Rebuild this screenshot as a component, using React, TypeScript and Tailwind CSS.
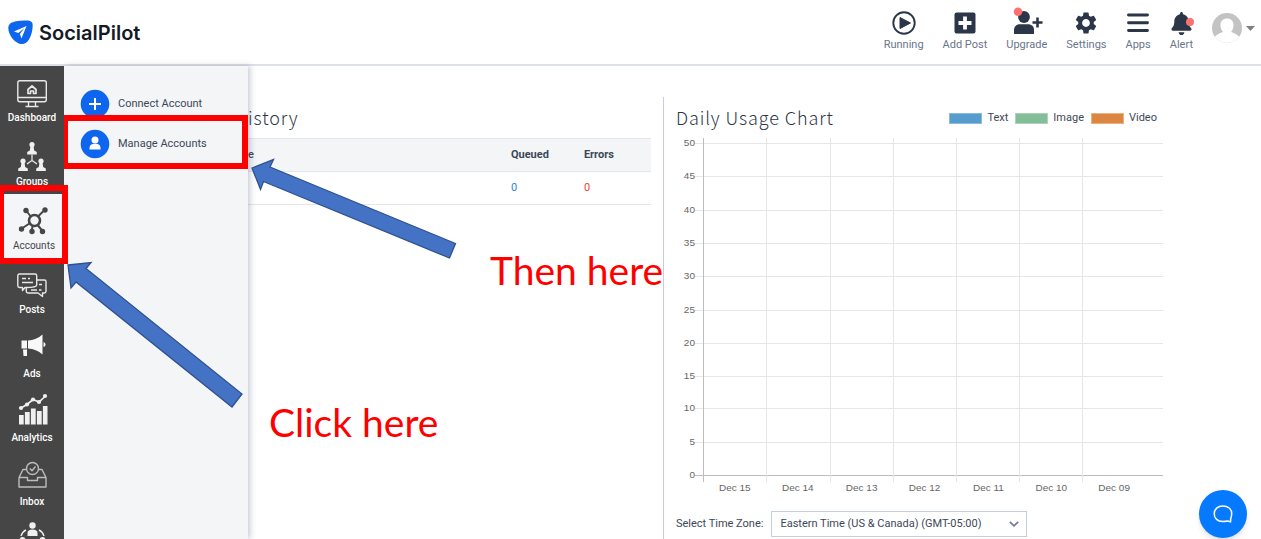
import type { ReactNode } from "react";
import { FaBell } from "react-icons/fa";
import { MdSettings } from "react-icons/md";

const TIME_ZONE = "Eastern Time (US & Canada) (GMT-05:00)";

const CHART_DAYS = ["Dec 15", "Dec 14", "Dec 13", "Dec 12", "Dec 11", "Dec 10", "Dec 09"];
const CHART_TICKS = [50, 45, 40, 35, 30, 25, 20, 15, 10, 5, 0];

type NavItem = {
  label: string;
  icon: ReactNode;
  active?: boolean;
};

const SIDE_ITEMS: NavItem[] = [
  { label: "Dashboard", icon: <DashboardIcon /> },
  { label: "Groups", icon: <GroupsIcon /> },
  { label: "Accounts", icon: <AccountsIcon />, active: true },
  { label: "Posts", icon: <PostsIcon /> },
  { label: "Ads", icon: <AdsIcon /> },
  { label: "Analytics", icon: <AnalyticsIcon /> },
  { label: "Inbox", icon: <InboxIcon /> },
  { label: "", icon: <TeamIcon /> },
];

const TOP_ITEMS: NavItem[] = [
  { label: "Running", icon: <RunningIcon /> },
  { label: "Add Post", icon: <AddPostIcon /> },
  { label: "Upgrade", icon: <UpgradeIcon /> },
  { label: "Settings", icon: <MdSettings className="size-[26px]" /> },
  { label: "Apps", icon: <AppsIcon /> },
  { label: "Alert", icon: <AlertIcon /> },
];

export default function App() {
  return (
    <div className="relative flex h-screen flex-col overflow-hidden bg-white font-['Roboto',sans-serif] text-[#3c4858]">
      <Header />
      <div className="flex min-h-0 flex-1">
        <Sidebar />
        <AccountsMenu />
        <main className="grid min-w-0 flex-1 grid-cols-[5fr_6fr] pr-[98px] pt-[31px]">
          <HistoryPanel />
          <UsagePanel />
        </main>
      </div>
      <Annotations />
      <button
        type="button"
        aria-label="Open chat"
        className="absolute bottom-px right-3.5 flex size-12 items-center justify-center rounded-full bg-[#057aff] shadow-md"
      >
        <svg viewBox="0 0 20 20" className="size-5" fill="none" stroke="white" strokeWidth="1.5" strokeLinejoin="round">
          <path d="M17.6 15.2V17.9L14.6 17C13 17.4 11.4 17.5 9.6 17.5C4.6 17.5 1.2 14.4 1.2 9.8C1.2 5.2 4.8 1.9 9.8 1.9C15 1.9 18.7 5 18.7 9.6C18.7 11.9 18.2 13.6 17.6 15.2Z" />
        </svg>
      </button>
    </div>
  );
}

function Header() {
  return (
    <header className="flex h-[66px] shrink-0 items-start justify-between border-b-2 border-[#dce0e8] pl-2 pr-1.5">
      <a href="#" className="mt-5 flex h-6 items-center gap-1.5">
        <svg viewBox="0 0 25 25" className="size-[25px]" aria-hidden="true">
          <path d="M.3 8C.3 4 3 2.300 8 1.200C12 .3 17 .3 20 .6C23.500 1 24.800 2.500 24.700 5.500C24.600 10 23.500 15.500 21 19.500C18 24.300 13.500 25.300 9 22.500C4 19.500.3 13 .3 8Z" fill="#0f66ee" />
          <path d="M18.500 6L6 11.600L10.300 13L16.500 8L11.900 13.900L13.500 18.400Z" fill="white" />
        </svg>
        <span className="pt-0.5 font-['Inter',sans-serif] text-xl font-semibold leading-6 text-[#151b26]">
          SocialPilot
        </span>
      </a>
      <nav className="flex items-start gap-[19px] pt-[9px]">
        {TOP_ITEMS.map((item) => (
          <a key={item.label} href="#" className="flex flex-col items-center text-[#2b3648]">
            <span className="flex h-7 items-center">{item.icon}</span>
            <span className="text-[11px] leading-4 text-[#69758a]">{item.label}</span>
          </a>
        ))}
        <button type="button" aria-label="Profile" className="mt-1 flex items-center gap-1">
          <svg viewBox="0 0 30 30" className="size-[30px]">
            <defs>
              <clipPath id="avatar">
                <circle cx="15" cy="15" r="15" />
              </clipPath>
            </defs>
            <g clipPath="url(#avatar)">
              <rect width="30" height="30" fill="#c3c3c3" />
              <path d="M8.500 12C8.500 8 11 5.500 15 5.500S21.500 8 21.500 12C21.500 15 20.500 17.500 19 19C22.500 20.500 27 21.500 28 26V30H2V26C3 21.500 7.500 20.500 11 19C9.500 17.500 8.500 15 8.500 12Z" fill="white" />
            </g>
          </svg>
          <svg viewBox="0 0 9 5" className="h-[5px] w-[9px]" fill="#808080">
            <path d="M0 0H9L4.500 5Z" />
          </svg>
        </button>
      </nav>
    </header>
  );
}

function Sidebar() {
  return (
    <nav className="relative z-20 w-16 shrink-0 bg-[#464646]">
      {SIDE_ITEMS.map((item) => (
        <a
          key={item.label}
          href="#"
          className={
            item.active
              ? "relative flex h-16 flex-col items-center bg-[#f3f5f8] pl-1 pt-[11px] text-[#464646]"
              : "flex h-16 flex-col items-center pt-[11px] text-white"
          }
        >
          {item.icon}
          <span className={item.active ? "text-[10px] leading-[18px]" : "text-[10px] font-medium leading-[18px]"}>
            {item.label}
          </span>
          {item.active ? (
            <span className="absolute -top-[9px] left-0 h-[79px] w-[68px] border-6 border-l-4 border-[#ff0000]" />
          ) : null}
        </a>
      ))}
    </nav>
  );
}

function AccountsMenu() {
  return (
    <aside className="relative z-10 w-46 shrink-0 bg-[#f3f5f7] pt-[18px] shadow-[2px_0_6px_rgba(60,80,110,0.3)]">
      <a href="#" className="flex h-10 items-center gap-2 pl-4 text-[11px]">
        <svg viewBox="0 0 30 30" className="size-[30px]">
          <circle cx="15" cy="15" r="14.300" fill="#0f66ee" />
          <path d="M15 9V21M9 15H21" stroke="white" strokeWidth="2" />
        </svg>
        Connect Account
      </a>
      <a href="#" className="relative flex h-10 items-center gap-2 pl-4 text-[11px]">
        <svg viewBox="0 0 30 30" className="size-[30px]">
          <circle cx="15" cy="15" r="14.300" fill="#0f66ee" />
          <circle cx="15" cy="11" r="3.500" fill="white" />
          <path d="M9.500 20.500V19C9.500 16 11.500 14.800 15 14.800S20.500 16 20.500 19V20.500Z" fill="white" />
        </svg>
        Manage Accounts
        <span className="absolute -left-0.5 -top-[9px] h-[54px] w-[186px] border-6 border-[#ff0000]" />
      </a>
    </aside>
  );
}

function HistoryPanel() {
  return (
    <section className="border-r border-[#c9cfda] pr-3">
      <PanelTitle>istory</PanelTitle>
      <table className="mt-[9px] w-full table-fixed text-left text-[11px] leading-4">
        <thead>
          <tr className="h-[33px] border-y border-[#e3e7ec] bg-[#f3f5f7]">
            <th className="font-medium">e</th>
            <th className="w-[73px] font-bold">Queued</th>
            <th className="w-[67px] font-bold">Errors</th>
          </tr>
        </thead>
        <tbody>
          <tr className="h-[33px] border-b border-[#e3e7ec]">
            <td />
            <td className="text-[#2f80ed]">0</td>
            <td className="text-[#f04438]">0</td>
          </tr>
        </tbody>
      </table>
    </section>
  );
}

function UsagePanel() {
  return (
    <section className="min-w-0 pl-3">
      <div className="flex items-start justify-between">
        <PanelTitle>Daily Usage Chart</PanelTitle>
        <ul className="mt-3 flex gap-[7px] pr-1.5 text-[11px] leading-[18px]">
          <LegendItem label="Text" swatch="border-[#8dbbdf] bg-[#569ccd]" />
          <LegendItem label="Image" swatch="border-[#aed3bb] bg-[#84be98]" />
          <LegendItem label="Video" swatch="border-[#eab184] bg-[#dc8642]" />
        </ul>
      </div>
      <UsageChart />
      <div className="mt-4 flex items-center gap-2 text-[11px]">
        <label htmlFor="time-zone">Select Time Zone:</label>
        <div className="relative">
          <select
            id="time-zone"
            defaultValue={TIME_ZONE}
            className="h-[26px] w-64 appearance-none border border-[#c5cde0] bg-white pl-2 pr-8 text-[11px]"
          >
            <option>{TIME_ZONE}</option>
          </select>
          <svg viewBox="0 0 10 6" className="pointer-events-none absolute right-2 top-2.5 h-1.5 w-2.5" fill="none" stroke="#6f7f9c" strokeWidth="1.800">
            <path d="M.8.8L5 4.800L9.200.8" />
          </svg>
        </div>
      </div>
    </section>
  );
}

function PanelTitle({ children }: { children: ReactNode }) {
  return (
    <h2 className="pt-2 font-['Noto_Sans_CJK_SC',sans-serif] text-lg font-light leading-6 tracking-wider text-[#2b3648]">
      {children}
    </h2>
  );
}

function LegendItem({ label, swatch }: { label: string; swatch: string }) {
  return (
    <li className="flex items-center gap-[5px]">
      <span className={`h-[11px] w-[33px] border ${swatch}`} />
      {label}
    </li>
  );
}

function UsageChart() {
  return (
    <svg viewBox="0 0 488 360" className="mt-[7px] w-full font-['Liberation_Sans',sans-serif]" role="img" aria-label="Daily usage">
      <g shapeRendering="crispEdges">
        {CHART_TICKS.map((tick, i) => (
          <rect key={tick} x="19" y={Math.round(7 + i * 33.3)} width="469" height="1" fill={tick === 0 ? "#bdbdbd" : "#e6e6e6"} />
        ))}
        {CHART_DAYS.map((day, i) => (
          <rect key={day} x={Math.round(27 + i * 63.4)} y="2" width="1" height="345" fill={i === 0 ? "#bdbdbd" : "#e6e6e6"} />
        ))}
      </g>
      <g fill="#666666" fontSize="10">
        {CHART_TICKS.map((tick, i) => (
          <text key={tick} x="19" y={Math.round(10 + i * 33.3)} textAnchor="end">
            {tick}
          </text>
        ))}
        {CHART_DAYS.map((day, i) => (
          <text key={day} x={Math.round(59 + i * 63.4)} y="356" textAnchor="middle">
            {day}
          </text>
        ))}
      </g>
    </svg>
  );
}

// Arrows and captions that float over the dashboard.
function Annotations() {
  return (
    <div className="pointer-events-none absolute inset-0 z-30 font-['Lato',sans-serif] text-[39px] leading-none text-[#ff0000]">
      <svg className="absolute left-0 top-0 h-[420px] w-[480px]" fill="#4472c4" stroke="#2f528f" strokeWidth="1.300">
        <path d="M68 265L91 262.500L86 268.500L242 394L232 407L76 282L71 288Z" />
        <path d="M252 168L273.500 159.500L270 167L455.500 243.500L449.500 258L263.500 181.500L260.500 189.500Z" />
      </svg>
      <p className="absolute left-[490px] top-[251px]">Then here</p>
      <p className="absolute left-[269px] top-[403px]">Click here</p>
    </div>
  );
}

function RunningIcon() {
  return (
    <svg viewBox="0 0 24 24" className="size-6">
      <circle cx="12" cy="12" r="10.700" fill="none" stroke="currentColor" strokeWidth="1.900" />
      <path d="M8 6.500L18.500 12L8 17.500Z" fill="currentColor" stroke="currentColor" strokeLinejoin="round" />
    </svg>
  );
}

function AddPostIcon() {
  return (
    <svg viewBox="0 0 24 24" className="size-6">
      <rect x="1.500" y="1.500" width="21" height="21" rx="2" fill="currentColor" />
      <path d="M12 5.500V18.500M5.500 12H18.500" stroke="white" strokeWidth="3.800" />
    </svg>
  );
}

function UpgradeIcon() {
  return (
    <svg viewBox="0 0 32 28" className="h-7 w-8 overflow-visible" fill="currentColor">
      <circle cx="13" cy="8" r="5.900" />
      <path d="M3 25V21C3 17.500 5.500 15.300 9 15.300H17C20.500 15.300 23 17.500 23 21V25Z" />
      <path d="M26.500 8.500V18.500M21.500 13.500H31.500" stroke="currentColor" strokeWidth="2.600" />
      <circle cx="7" cy="2.700" r="4.300" fill="#ff7070" />
    </svg>
  );
}

function AppsIcon() {
  return (
    <svg viewBox="0 0 24 24" className="size-6">
      <path d="M2.500 4H21.500M2.500 11.700H21.500M2.500 19.500H21.500" stroke="currentColor" strokeWidth="2.900" strokeLinecap="round" />
    </svg>
  );
}

function AlertIcon() {
  return (
    <span className="relative">
      <FaBell className="size-[23px]" />
      <span className="absolute -right-px top-1.5 size-2 rounded-full bg-[#ff7070]" />
    </span>
  );
}

function DashboardIcon() {
  return (
    <svg viewBox="0 0 32 32" className="size-8 shrink-0" fill="none" stroke="#e8e8e8" strokeWidth="1.400">
      <rect x="1.800" y="3.800" width="28.500" height="21" rx="2" />
      <path d="M2 20.500H30M12.500 25V29M19.500 25V29M9.500 29.500H22.500" />
      <path d="M12 12.500L16 9L20 12.500V16.500H17.500V14H14.500V16.500H12Z" strokeWidth="1.700" strokeLinejoin="round" />
    </svg>
  );
}

function Pawn({ x, y }: { x: number; y: number }) {
  return (
    <g transform={`translate(${x} ${y})`}>
      <circle cx="0" cy="2.500" r="2.600" />
      <path d="M-1.500 4H1.500L2.200 8.500L4.800 10V12.500H-4.800V10L-2.200 8.500Z" />
    </g>
  );
}

function GroupsIcon() {
  return (
    <svg viewBox="0 0 32 32" className="size-8 shrink-0" fill="#f0f0f0">
      <Pawn x={16} y={1} />
      <Pawn x={7} y={17.5} />
      <Pawn x={25} y={17.5} />
      <path d="M16 13.500V19.500L11 23M16 19.500L21 23" fill="none" stroke="#f0f0f0" strokeWidth="1.200" />
    </svg>
  );
}

function AccountsIcon() {
  return (
    <svg viewBox="0 0 32 32" className="size-8 shrink-0" fill="currentColor">
      <path d="M16 15.500L27 4.500M16 15.500L8 5.500M16 15.500L3 24M16 15.500L13.500 26M16 15.500L24.500 26" stroke="currentColor" strokeWidth="2" />
      <circle cx="27" cy="5" r="2.700" />
      <circle cx="8" cy="5.500" r="2.700" />
      <circle cx="3.500" cy="24" r="2.700" />
      <circle cx="14" cy="26.500" r="2.700" />
      <circle cx="24.500" cy="26.500" r="2.700" />
      <circle cx="16.500" cy="15.500" r="5.500" fill="#f3f5f8" stroke="currentColor" strokeWidth="2.600" />
    </svg>
  );
}

function PostsIcon() {
  return (
    <svg viewBox="0 0 32 32" className="size-8 shrink-0" fill="none" stroke="#e8e8e8" strokeWidth="1.400" strokeLinejoin="round">
      <path d="M10.300 18.500H9L6.500 21.500V18.500H3.500Q1.800 18.500 1.800 16.800V6.700Q1.800 5 3.500 5H19Q20.700 5 20.700 6.700V11" />
      <path d="M20.700 11H28.300Q30 11 30 12.700V22.300Q30 24 28.300 24H26.500V27.500L22 24H12Q10.300 24 10.300 22.300V18.500Q20.700 18.500 20.700 16V11" />
      <path d="M6 9.500H10M12 9.500H14M6 13.500H17M23 15.500H26M15 21H21M23 21H25.500" />
    </svg>
  );
}

function AdsIcon() {
  return (
    <svg viewBox="0 0 32 32" className="size-8 shrink-0" fill="#f8f8f8">
      <path d="M5.500 7.500H11V15.500H5.500Z M12 7.500C17.500 7.300 22.500 5 26.500 1.500V21.500C22.500 18 17.500 15.700 12 15.500Z M7 16.500H11V23H7.500Z" />
      <path d="M27.500 9Q29.500 9.500 29.500 11.500T27.500 14Z" />
    </svg>
  );
}

function AnalyticsIcon() {
  return (
    <svg viewBox="0 4 32 32" className="size-8 shrink-0 overflow-visible" fill="#f0f0f0">
      <path d="M3 22H7.700V31.500H3ZM8.900 19H13.700V31.500H8.900ZM14.900 15.500H19.700V31.500H14.900ZM20.900 18H25.700V31.500H20.900ZM26.900 13H31.500V31.500H26.900Z" />
      <path d="M5 15L11 11.500L17 6.500L23 9L29.500 3" fill="none" stroke="#f0f0f0" strokeWidth="1.700" />
      <circle cx="5" cy="15" r="2.100" />
      <circle cx="11" cy="11.500" r="2.100" />
      <circle cx="17" cy="6.500" r="2.100" />
      <circle cx="23" cy="9" r="2.100" />
      <circle cx="29" cy="3" r="2.100" />
    </svg>
  );
}

function InboxIcon() {
  return (
    <svg viewBox="0 3 32 32" className="size-8 shrink-0 overflow-visible" fill="none" stroke="#bdbdbd" strokeWidth="1.400" strokeLinejoin="round">
      <path d="M3 19.500V29H30V19.500H21.500V22.500H11.500V19.500ZM3 19.500L7 11.500H10M30 19.500L26 11.500H23" />
      <circle cx="16.500" cy="10.500" r="6" />
      <path d="M13.800 10.500L16 12.700L19.500 8.500" />
    </svg>
  );
}

function TeamIcon() {
  return (
    <svg viewBox="0 3 32 32" className="size-8 shrink-0 overflow-visible" fill="#f0f0f0">
      <circle cx="16.500" cy="3.500" r="3.200" />
      <path d="M11.500 14V11Q11.500 7.500 16.500 7.500T21.500 11V14Z" />
      <path d="M5 14Q6.500 9.500 10 8M28 14Q26.500 9.500 23 8" fill="none" stroke="#f0f0f0" strokeWidth="1.400" />
      <circle cx="6.500" cy="18" r="3" />
      <circle cx="26.500" cy="18" r="3" />
    </svg>
  );
}
